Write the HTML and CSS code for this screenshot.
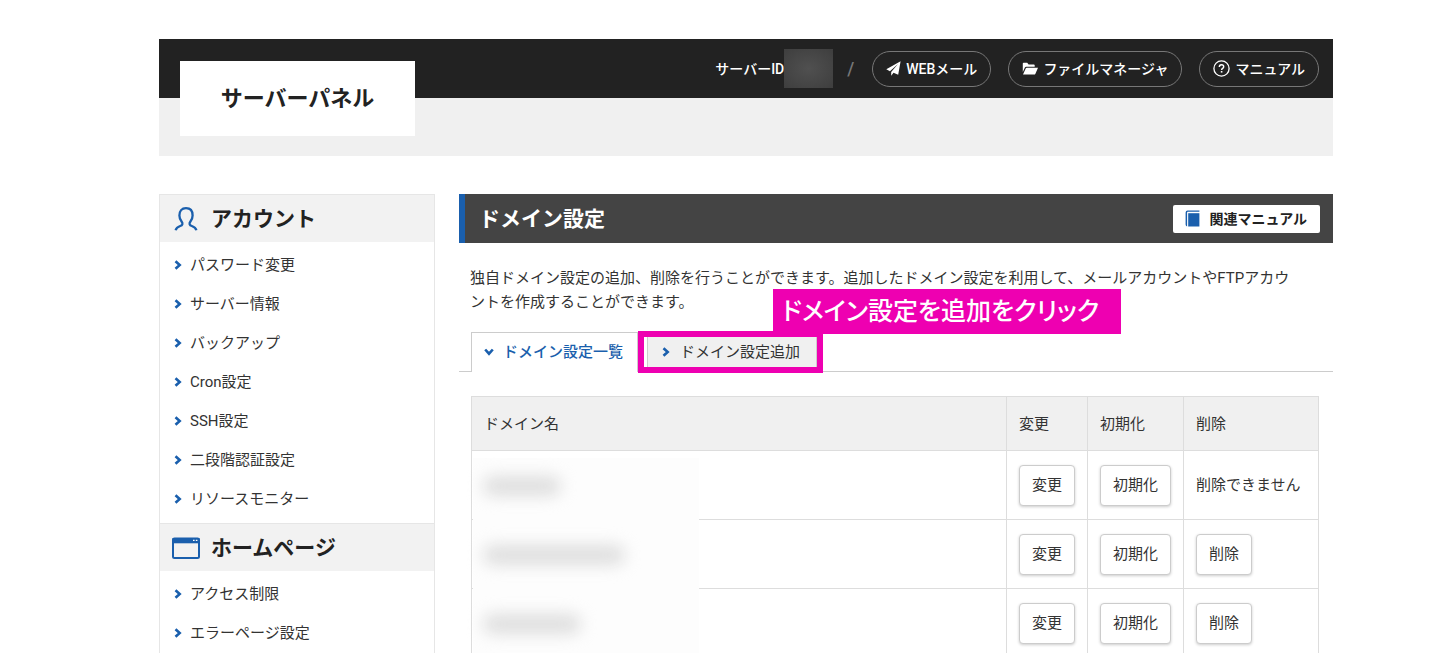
FILE: index.html
```html
<!DOCTYPE html>
<html lang="ja">
<head>
<meta charset="utf-8">
<title>サーバーパネル - ドメイン設定</title>
<link rel="stylesheet" href="styles.css">
</head>
<body>
<svg class="defs" aria-hidden="true">
  <symbol id="chev" viewBox="0 0 8 10"><path d="M1.500 1.200 5.700 5 1.500 8.800" fill="none" stroke="currentColor" stroke-width="2.600"/></symbol>
</svg>
<header class="header">
  <div class="topbar">
    <span class="server-id">サーバーID<span class="mask"></span></span>
    <span class="slash">/</span>
    <nav class="pills">
      <a class="pill" href="#"><svg width="15" height="15" viewBox="0 0 15 15"><path d="M14.600.3.3 8.300l3.600 1.900L12 3 5.200 10.900v3.800l2.300-2.900 4.700 1.900z" fill="#fff"/></svg>WEBメール</a>
      <a class="pill" href="#"><svg width="16" height="14" viewBox="0 0 16 14"><path d="M.8 10V1.600Q.8.8 1.600.8h3.600l1.400 1.600h5.200q.9 0 .9.9v1.400H4.200q-.9 0-1.300.8z" fill="#fff"/><path d="M1 12.600 3.700 6.500q.3-.7 1.100-.7H16l-2.700 6.100q-.3.7-1.100.7z" fill="#fff"/></svg>ファイルマネージャ</a>
      <a class="pill" href="#"><svg width="17" height="17" viewBox="0 0 17 17"><circle cx="8.500" cy="8.500" r="7.600" fill="none" stroke="#fff" stroke-width="1.300"/><path d="M6.300 6.900C6.300 5.500 7.200 4.700 8.500 4.700s2.200.8 2.200 2c0 1.700-2.100 1.600-2.100 3.300" fill="none" stroke="#fff" stroke-width="1.400"/><path d="M7.800 11h1.600v1.600H7.800z" fill="#fff"/></svg>マニュアル</a>
    </nav>
  </div>
  <div class="logo">サーバーパネル</div>
</header>

<div class="columns">
  <aside class="sidebar">
    <h2 class="side-title"><svg width="30" height="28" viewBox="0 0 30 28"><path d="M4.600 25.200c.6-2.400 2.400-3.400 4.600-4.200 2.300-.8 2.900-2.300 1.500-4.200C9.200 14.900 8.400 13.200 8.400 10.400c0-4.400 2.300-7.200 6.600-7.200s6.600 2.800 6.600 7.200c0 2.800-.8 4.500-2.300 6.400-1.400 1.900-.8 3.400 1.500 4.200 2.200.8 4 1.800 4.600 4.200" fill="none" stroke="#1a5fad" stroke-width="2.300"/></svg>アカウント</h2>
    <ul class="side-list">
      <li><a href="#"><svg class="chev"><use href="#chev"/></svg>パスワード変更</a></li>
      <li><a href="#"><svg class="chev"><use href="#chev"/></svg>サーバー情報</a></li>
      <li><a href="#"><svg class="chev"><use href="#chev"/></svg>バックアップ</a></li>
      <li><a href="#"><svg class="chev"><use href="#chev"/></svg>Cron設定</a></li>
      <li><a href="#"><svg class="chev"><use href="#chev"/></svg>SSH設定</a></li>
      <li><a href="#"><svg class="chev"><use href="#chev"/></svg>二段階認証設定</a></li>
      <li><a href="#"><svg class="chev"><use href="#chev"/></svg>リソースモニター</a></li>
    </ul>
    <h2 class="side-title"><svg width="30" height="28" viewBox="0 0 30 28"><rect x="2" y="4.500" width="26" height="19.500" rx="1.500" fill="none" stroke="#1a5fad" stroke-width="2"/><path d="M1.500 4h27v5.300h-27z" fill="#1a5fad"/><path d="M22 6.300h1.600m1.200 0h1.600" stroke="#fff" stroke-width="1.200"/></svg>ホームページ</h2>
    <ul class="side-list">
      <li><a href="#"><svg class="chev"><use href="#chev"/></svg>アクセス制限</a></li>
      <li><a href="#"><svg class="chev"><use href="#chev"/></svg>エラーページ設定</a></li>
    </ul>
  </aside>

  <main class="main">
    <div class="page-head">
      <h1 class="page-title">ドメイン設定</h1>
      <a class="manual" href="#"><svg width="15" height="17" viewBox="0 0 15 17"><path d="M.6 2.600Q.6.600 2.600.6h11.800v1.200H2.800q-.7 0-.7.800v13.900Q.6 16 .6 14.600z" fill="#1a5fad"/><path d="M3.200 3.200h11.200v13.300H3.200z" fill="#1a5fad"/></svg>関連マニュアル</a>
    </div>
    <p class="lead">独自ドメイン設定の追加、削除を行うことができます。追加したドメイン設定を利用して、メールアカウントやFTPアカウントを作成することができます。</p>
    <nav class="tabs">
      <a class="tab tab-active" href="#"><svg class="chev chev-down"><use href="#chev"/></svg>ドメイン設定一覧</a>
      <div class="tab-wrap">
        <a class="tab" href="#"><svg class="chev"><use href="#chev"/></svg>ドメイン設定追加</a>
        <span class="frame"></span>
        <strong class="callout">ドメイン設定を追加をクリック</strong>
      </div>
    </nav>
    <div class="table-wrap">
      <table class="domains">
        <thead>
          <tr><th>ドメイン名</th><th class="c-edit">変更</th><th class="c-init">初期化</th><th class="c-del">削除</th></tr>
        </thead>
        <tbody>
          <tr><td></td><td><button class="btn">変更</button></td><td><button class="btn">初期化</button></td><td>削除できません</td></tr>
          <tr><td></td><td><button class="btn">変更</button></td><td><button class="btn">初期化</button></td><td><button class="btn">削除</button></td></tr>
          <tr><td></td><td><button class="btn">変更</button></td><td><button class="btn">初期化</button></td><td><button class="btn">削除</button></td></tr>
        </tbody>
      </table>
      <div class="cover"><span class="blob blob-s"></span><span class="blob blob-l"></span><span class="blob blob-m"></span></div>
    </div>
  </main>
</div>
</body>
</html>
```

FILE: styles.css
```css
* { box-sizing: border-box; }
html { overflow: hidden; }
body {
  margin: 0;
  padding: 39px 117px 0 159px;
  background: #fff;
  color: #333;
  font: 15px/24px Roboto, "Noto Sans CJK JP", sans-serif;
}
a { color: inherit; text-decoration: none; }
.defs { position: absolute; width: 0; height: 0; }

.header {
  position: relative;
  padding-bottom: 58px;
  background: #f0f0f0;
}
.topbar {
  display: flex;
  align-items: center;
  justify-content: flex-end;
  height: 59px;
  padding-right: 14px;
  background: #222;
  color: #fff;
  font-size: 14px;
  font-weight: 500;
}
.server-id { display: flex; align-items: center; }
.mask {
  width: 49px;
  height: 39px;
  background: radial-gradient(#505050, #3e3e3e);
}
.slash { margin: 0 18px 0 14px; color: #777; font-size: 18px; }
.pills { display: flex; gap: 17px; }
.pill {
  display: flex;
  align-items: center;
  gap: 5px;
  height: 36px;
  padding: 0 13px;
  border: 1px solid #777;
  border-radius: 18px;
}
.logo {
  position: absolute;
  top: 22px;
  left: 21px;
  width: 235px;
  background: #fff;
  color: #222;
  font-size: 22px;
  font-weight: 700;
  line-height: 75px;
  text-align: center;
}

.columns { display: flex; gap: 24px; margin-top: 38px; }
.sidebar {
  flex: 0 0 276px;
  border: 1px solid #e6e6e6;
  border-top: 0;
}
.side-title {
  display: flex;
  align-items: center;
  gap: 10px;
  height: 48px;
  margin: 0;
  padding-left: 11px;
  border-top: 1px solid #e6e6e6;
  background: #f2f2f2;
  color: #222;
  font-size: 21px;
}
.side-list {
  margin: 0;
  padding: 3px 0 5px 14px;
  list-style: none;
}
.side-list a { display: flex; align-items: center; gap: 8px; height: 39px; }
.chev { width: 8px; height: 10px; color: #1a5fad; }
.chev-down { transform: rotate(90deg); }

.main { flex: 1; min-width: 0; }
.page-head {
  display: flex;
  align-items: center;
  justify-content: space-between;
  height: 49px;
  padding: 0 13px 0 14px;
  border-left: 6px solid #1a5fad;
  background: #444;
}
.page-title { margin: 0; color: #fff; font-size: 21px; }
.manual {
  display: flex;
  align-items: center;
  gap: 9px;
  height: 28px;
  padding: 0 13px 0 12px;
  border-radius: 2px;
  background: #fff;
  color: #222;
  font-size: 14px;
  font-weight: 700;
}
.lead { margin: 0; padding: 23px 40px 18px 11px; }
.tabs {
  display: flex;
  gap: 9px;
  padding-left: 12px;
  border-bottom: 1px solid #ccc;
}
.tab {
  display: flex;
  align-items: center;
  gap: 10px;
  height: 39px;
  padding: 0 16px 0 14px;
  border: 1px solid #ccc;
  border-bottom: 0;
  background: #f0f0f0;
}
.tab-active {
  height: 40px;
  margin-bottom: -1px;
  padding: 0 14px 2px 13px;
  background: #fff;
  color: #1a5fad;
  font-weight: 500;
}
.tab-wrap { position: relative; }
.frame {
  position: absolute;
  inset: -1px -6px -2px -9px;
  border: 6px solid #ee00b1;
}
.callout {
  position: absolute;
  left: 126px;
  bottom: 37px;
  padding: 0 22px 0 9px;
  background: #ee00b1;
  color: #fff;
  font-size: 25px;
  font-weight: 500;
  font-feature-settings: "palt";
  line-height: 45px;
  white-space: nowrap;
}

.table-wrap { position: relative; margin: 24px 14px 0 12px; }
.domains { width: 100%; border-collapse: collapse; table-layout: fixed; }
.domains th, .domains td {
  padding: 0 12px;
  border: 1px solid #ddd;
  font-weight: 400;
  text-align: left;
}
.domains th { height: 54px; background: #f0f0f0; }
.domains td { height: 69px; }
.c-edit { width: 81px; }
.c-init { width: 96px; }
.c-del { width: 135px; }
.btn {
  height: 41px;
  padding: 0 12px;
  border: 1px solid #ccc;
  border-radius: 4px;
  background: #fff;
  box-shadow: 0 1px 3px #0003;
  color: #333;
  font: inherit;
}
.cover {
  position: absolute;
  inset: 62px auto 0 2px;
  display: flex;
  flex-direction: column;
  gap: 49px;
  width: 226px;
  padding: 18px 10px;
  background: #fdfdfd;
}
.blob { height: 20px; border-radius: 10px; background: #dedede; filter: blur(8px); }
.blob-s { width: 78px; }
.blob-m { width: 98px; }
.blob-l { width: 142px; }
```
